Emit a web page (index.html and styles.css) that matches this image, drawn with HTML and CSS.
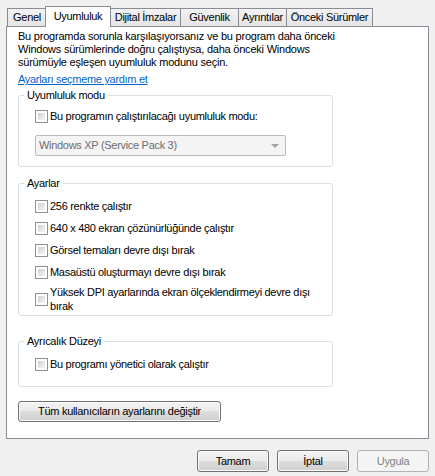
FILE: index.html
```html
<!DOCTYPE html>
<html lang="tr">
<head>
<meta charset="utf-8">
<title>Özellikler</title>
<link rel="stylesheet" href="styles.css">
</head>
<body>
<div class="dialog">
  <div class="tabs">
    <div class="tab t1">Genel</div>
    <div class="tab t2 active">Uyumluluk</div>
    <div class="tab t3">Dijital İmzalar</div>
    <div class="tab t4">Güvenlik</div>
    <div class="tab t5">Ayrıntılar</div>
    <div class="tab t6">Önceki Sürümler</div>
  </div>
  <div class="panel">
    <p class="intro">Bu programda sorunla karşılaşıyorsanız ve bu program daha önceki<br>Windows sürümlerinde doğru çalıştıysa, daha önceki Windows<br>sürümüyle eşleşen uyumluluk modunu seçin.</p>
    <a class="link" href="#">Ayarları seçmeme yardım et</a>

    <fieldset class="group g1">
      <legend>Uyumluluk modu</legend>
      <label class="check"><span class="box"></span><span>Bu programın çalıştırılacağı uyumluluk modu:</span></label>
      <div class="combo"><span>Windows XP (Service Pack 3)</span><span class="arrow"></span></div>
    </fieldset>

    <fieldset class="group g2">
      <legend>Ayarlar</legend>
      <label class="check"><span class="box"></span><span>256 renkte çalıştır</span></label>
      <label class="check"><span class="box"></span><span>640 x 480 ekran çözünürlüğünde çalıştır</span></label>
      <label class="check"><span class="box"></span><span>Görsel temaları devre dışı bırak</span></label>
      <label class="check"><span class="box"></span><span>Masaüstü oluşturmayı devre dışı bırak</span></label>
      <label class="check multi"><span class="box"></span><span>Yüksek DPI ayarlarında ekran ölçeklendirmeyi devre dışı<br>bırak</span></label>
    </fieldset>

    <fieldset class="group g3">
      <legend>Ayrıcalık Düzeyi</legend>
      <label class="check"><span class="box"></span><span>Bu programı yönetici olarak çalıştır</span></label>
    </fieldset>

    <button class="btn wide" type="button">Tüm kullanıcıların ayarlarını değiştir</button>
  </div>
  <div class="actions">
    <button class="btn" type="button">Tamam</button>
    <button class="btn" type="button">İptal</button>
    <button class="btn disabled" type="button">Uygula</button>
  </div>
</div>
</body>
</html>
```
FILE: styles.css
```css
* { box-sizing: border-box; }
html, body { margin: 0; }
body {
  background: #f0f0f0;
  font: 11px/13px "Liberation Sans", Arial, sans-serif;
  letter-spacing: -0.3px;
  color: #000;
  width: 435px;
  height: 476px;
  overflow: hidden;
}
.dialog { padding: 6px 6px 0; }

.tabs {
  display: flex;
  align-items: flex-end;
  height: 21px;
  padding-left: 1px;
  margin-bottom: -1px;
  position: relative;
  z-index: 1;
}
.tab {
  height: 18px;
  margin-bottom: 1px;
  margin-left: -1px;
  border: 1px solid #898c95;
  border-bottom: 0;
  background: linear-gradient(#f3f3f3, #e4e4e4);
  text-align: center;
  line-height: 17px;
  white-space: nowrap;
}
.tab.t1 { margin-left: 0; width: 40px; }
.tab.t2 { width: 66px; }
.tab.t3 { width: 71px; }
.tab.t4 { width: 59px; }
.tab.t5 { width: 49px; }
.tab.t6 { width: 87px; }
.tab.active {
  height: 21px;
  margin-bottom: 0;
  margin-left: -2px;
  background: #fff;
  line-height: 19px;
  position: relative;
  z-index: 2;
}

.panel {
  background: #fff;
  border: 1px solid #898c95;
  height: 413px;
  padding: 0 10px 0 11px;
}
.intro { margin: 3px 0 0; letter-spacing: -0.22px; }
.link {
  display: block;
  width: fit-content;
  margin-top: 4px;
  color: #0066cc;
  text-decoration: underline;
}

.group {
  margin: 3px 0 0;
  padding: 0;
  width: 315px;
  min-width: 0;
  border: 1px solid #d5dfe5;
  border-radius: 3px;
}
.group legend {
  padding: 0 3px;
  margin-left: 5px;
  line-height: 13px;
}
.g1 { padding: 8px 0 10px; }
.g2 { margin-top: 10px; padding: 10px 0 2px; }
.g3 { margin-top: 19px; padding: 10px 0 15px; }

.check {
  display: flex;
  align-items: center;
  height: 13px;
  margin-left: 16px;
  white-space: nowrap;
}
.g2 .check + .check { margin-top: 9px; }
.g2 .check.multi { margin-top: 6px; height: 28px; line-height: 14px; }
.box {
  flex: none;
  width: 13px;
  height: 13px;
  margin-right: 2px;
  border: 1px solid #8f8f8f;
  padding: 2px;
  background: linear-gradient(135deg, #cdd0d4, #f5f5f5) content-box, #fff;
}

.combo {
  margin: 12px 0 0 16px;
  width: 251px;
  height: 21px;
  border: 1px solid #b8bcbf;
  border-radius: 2px;
  background: #f4f4f4;
  color: #6d6d6d;
  display: flex;
  align-items: center;
  justify-content: space-between;
  padding: 0 6px 0 3px;
}
.arrow {
  width: 0;
  height: 0;
  border-style: solid;
  border-width: 4px 4px 0;
  border-color: #a2a2a2 transparent transparent;
}

.btn {
  font: inherit;
  letter-spacing: inherit;
  color: #000;
  width: 72px;
  height: 22px;
  padding: 0;
  border: 1px solid #707070;
  border-radius: 3px;
  background: linear-gradient(#f2f2f2 0%, #ebebeb 50%, #dddddd 50%, #cfcfcf 100%);
  box-shadow: inset 0 0 0 1px #fbfbfb;
}
.btn.wide {
  display: block;
  width: 203px;
  height: 21px;
  margin-top: 14px;
}
.btn.disabled {
  border-color: #adb2b5;
  background: #f4f4f4;
  color: #838383;
  box-shadow: none;
}
.actions {
  display: flex;
  justify-content: flex-end;
  gap: 8px;
  margin-top: 11px;
}
```
